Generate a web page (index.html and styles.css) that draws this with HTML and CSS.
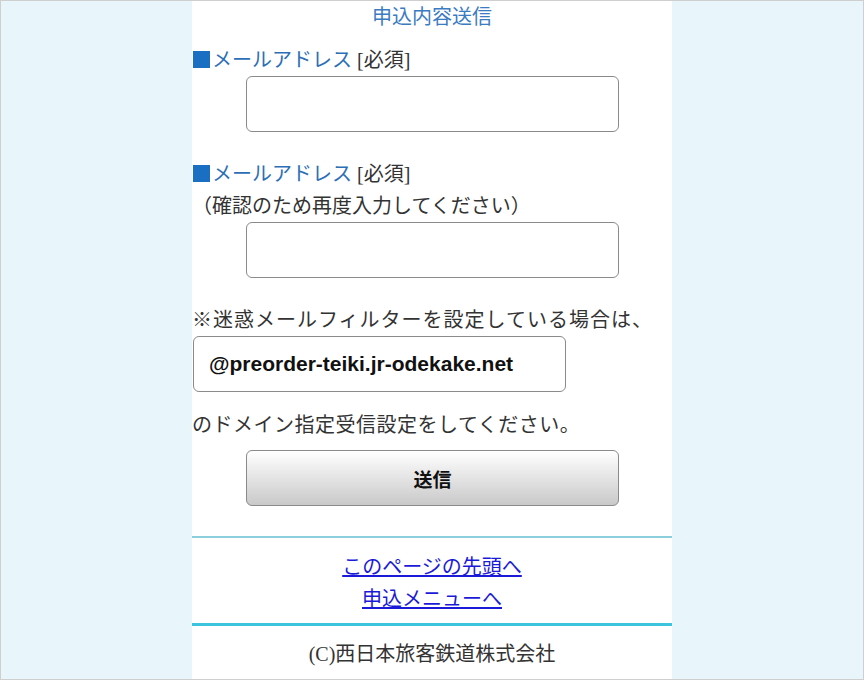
FILE: index.html
```html
<!DOCTYPE html>
<html lang="ja">
<head>
<meta charset="utf-8">
<title>申込内容送信</title>
<link rel="stylesheet" href="styles.css">
</head>
<body>
<div class="frame">
  <main class="column">
    <h1 class="title">申込内容送信</h1>
    <form class="form">
      <div class="field">
        <p class="label"><span class="label-name"><span class="mark"></span>メールアドレス</span> [必須]</p>
        <input class="textbox" type="text">
      </div>
      <div class="field">
        <p class="label"><span class="label-name"><span class="mark"></span>メールアドレス</span> [必須]</p>
        <p class="note">（確認のため再度入力してください）</p>
        <input class="textbox" type="text">
      </div>
      <div class="notice">
        <p class="line line-before">※迷惑メールフィルターを設定している場合は、</p>
        <div class="domain">@preorder-teiki.jr-odekake.net</div>
        <p class="line line-after">のドメイン指定受信設定をしてください。</p>
      </div>
      <button class="submit" type="button">送信</button>
    </form>
    <nav class="links">
      <a href="#">このページの先頭へ</a>
      <a href="#">申込メニューへ</a>
    </nav>
    <footer class="footer">(C)西日本旅客鉄道株式会社</footer>
  </main>
</div>
</body>
</html>
```

FILE: styles.css
```css
html, body {
  margin: 0;
  padding: 0;
}
body {
  font-family: "Liberation Serif", "Noto Sans CJK JP", serif;
  font-size: 20px;
  color: #333;
}
.frame {
  box-sizing: border-box;
  width: 864px;
  height: 680px;
  border: 1px solid #cfcfcf;
  background: #e8f6fc;
  overflow: hidden;
  display: flex;
  justify-content: center;
}
.column {
  width: 480px;
  background: #fff;
  display: flex;
  flex-direction: column;
}
.title {
  margin: 0;
  font-size: 20px;
  font-weight: normal;
  line-height: 33px;
  text-align: center;
  color: #3b7bc2;
}
.form {
  display: flex;
  flex-direction: column;
  padding-top: 10px;
}
.field {
  display: flex;
  flex-direction: column;
  margin-bottom: 26px;
}
.label, .note, .line {
  margin: 0;
  line-height: 32px;
}
.label-name {
  color: #2d6fb6;
}
.mark {
  display: inline-block;
  width: 17px;
  height: 17px;
  margin: 0 2px 0 1px;
  background: #1a6fc2;
  vertical-align: -1px;
}
.textbox {
  box-sizing: border-box;
  width: 373px;
  height: 56px;
  margin: 0 0 0 54px;
  border: 1px solid #8a8a8a;
  border-radius: 6px;
  background: #fff;
}
.notice {
  display: flex;
  flex-direction: column;
}
.line-before {
  letter-spacing: 1px;
}
.line-after {
  margin-top: 17px;
  letter-spacing: 0.5px;
}
.domain {
  box-sizing: border-box;
  width: 373px;
  height: 56px;
  margin-left: 1px;
  padding-left: 15px;
  border: 1px solid #8a8a8a;
  border-radius: 6px;
  display: flex;
  align-items: center;
  font-family: "Liberation Sans", Arial, sans-serif;
  font-weight: bold;
  font-size: 21px;
  color: #111;
}
.submit {
  box-sizing: border-box;
  width: 373px;
  height: 56px;
  margin: 9px 0 0 54px;
  border: 1px solid #8a8a8a;
  border-radius: 6px;
  background: linear-gradient(#ffffff, #c9c9c9);
  font-family: "Liberation Sans", "Noto Sans CJK JP", sans-serif;
  font-weight: bold;
  font-size: 19px;
  color: #111;
  padding: 0;
}
.links {
  margin-top: 30px;
  border-top: 2px solid #8ccfdc;
  border-bottom: 3px solid #3cc4df;
  padding: 13px 0 8px;
  display: flex;
  flex-direction: column;
  align-items: center;
}
.links a {
  line-height: 32px;
  color: #1a1ad8;
  text-decoration: underline;
}
.footer {
  line-height: 32px;
  padding-top: 12px;
  text-align: center;
  color: #333;
}
```
